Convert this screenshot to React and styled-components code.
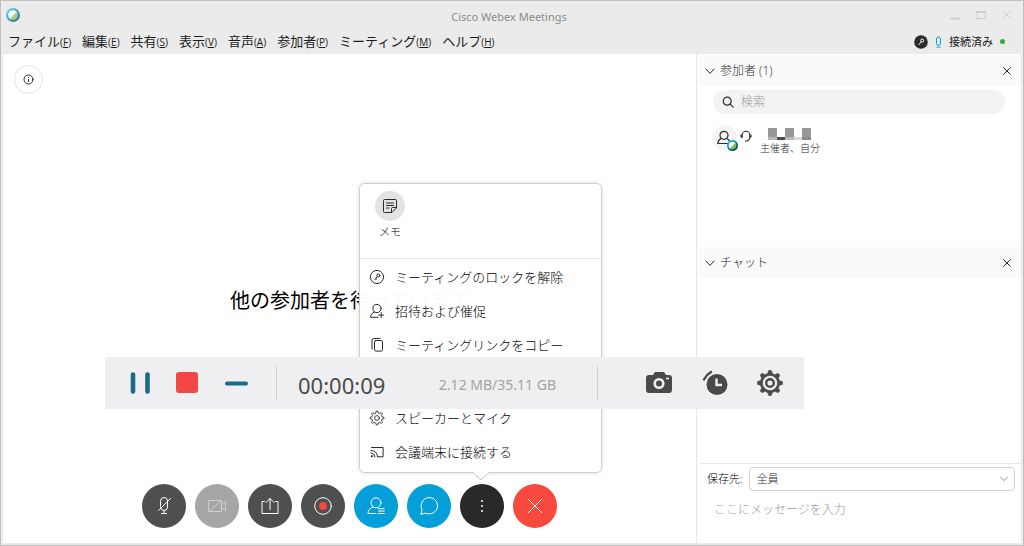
import React from 'react'
import styled, { createGlobalStyle, ThemeProvider } from 'styled-components'

const theme = {
  chrome: '#ebebeb',
  line: '#e6e6e6',
  panel: '#fafafa',
  field: '#f2f3f5',
  text: '#000',
  textSoft: '#2b2b2b',
  textHint: '#9a9a9a',
  icon: '#2b2b2b',
  dark: '#4f4f4f',
  blue: '#049fd9',
  red: '#f8493f',
  recorder: '#efeff1',
  recorderInk: '#4a4a4a',
  fontBase: '"Open Sans", "Noto Sans CJK JP", sans-serif',
  fontRecorder: '"Noto Sans", "Open Sans", sans-serif',
}

const GlobalStyle = createGlobalStyle`
  * {
    box-sizing: border-box;
  }

  body {
    margin: 0;
  }

  button, input, select, textarea {
    font: inherit;
    color: inherit;
    margin: 0;
    padding: 0;
    border: 0;
    background: none;
    outline: none;
  }

  svg {
    display: block;
    flex: none;
  }
`

const Window = styled.div`
  position: relative;
  min-height: 100vh;
  display: flex;
  flex-direction: column;
  border: 1px solid #bfbfbf;
  background: ${({theme}) => theme.chrome};
  color: ${({theme}) => theme.text};
  font-family: ${({theme}) => theme.fontBase};
  font-size: 13px;
  font-weight: 300;
  line-height: 16px;
`

const TitleBar = styled.header`
  height: 28px;
  padding: 0 11px 0 5px;
  display: grid;
  grid-template-columns: 1fr auto 1fr;
  align-items: center;
`

const Title = styled.h1`
  margin: 3px 0 0;
  font-family: ${({theme}) => theme.fontRecorder};
  font-size: 11px;
  font-weight: 400;
  color: #8c8c8c;
`

const WindowButtons = styled.div`
  display: flex;
  justify-content: flex-end;
  gap: 16px;
  color: #cdcdcd;
`

const BareButton = styled.button`
  display: flex;
  color: inherit;
`

const MenuBar = styled.div`
  height: 25px;
  padding: 0 18px 0 7px;
  display: flex;
  justify-content: space-between;
  align-items: center;
  color: #1c1c1c;
  font-weight: 400;
`

const Menus = styled.nav`
  display: flex;
  gap: 11px;
`

const MenuButton = styled.button`
  white-space: nowrap;

  & > span {
    font-size: 10px;
  }
`

const Status = styled.div`
  display: flex;
  align-items: center;
  gap: 7px;
  font-size: 11px;
`

const OnlineDot = styled.span`
  width: 5px;
  height: 5px;
  border-radius: 50%;
  background: #3aa63a;
`

const Content = styled.div`
  flex: 1;
  display: flex;
  margin: 0 2px 2px;
  background: #fff;
`

const Stage = styled.main`
  flex: 1;
  display: flex;
  flex-direction: column;
  justify-content: space-between;
  align-items: center;
  padding: 11px 0 15px;
`

const InfoButton = styled.button`
  align-self: flex-start;
  margin-left: 11px;
  width: 29px;
  height: 29px;
  display: flex;
  align-items: center;
  justify-content: center;
  border: 1px solid #e4e4e4;
  border-radius: 50%;
  color: ${({theme}) => theme.icon};
`

const Waiting = styled.p`
  margin: 24px 0 0;
  font-size: 20px;
  font-weight: 400;
  line-height: 28px;
`

const Controls = styled.div`
  display: flex;
  gap: 9px;
`

const ControlSlot = styled.div`
  position: relative;
`

const Round = styled.button`
  width: 44px;
  height: 44px;
  display: flex;
  align-items: center;
  justify-content: center;
  border-radius: 50%;
  color: ${props => props.$ink || '#fff'};
  background: ${props => props.$color};
`

const Popup = styled.div`
  position: absolute;
  bottom: 55px;
  left: 50%;
  width: 243px;
  margin-left: -123px;
  padding-bottom: 3px;
  border: 1px solid #cfcfcf;
  border-radius: 6px;
  background: rgba(255, 255, 255, 0.98);
  box-shadow: 0 0 4px rgba(0, 0, 0, 0.14);
`

const PopupArrow = styled.svg`
  position: absolute;
  top: 100%;
  left: 50%;
  margin: -1px 0 0 -10px;
`

const PopupTop = styled.div`
  height: 75px;
  padding: 7px 15px 0;
  border-bottom: 1px solid ${({theme}) => theme.line};
`

const NoteButton = styled.button`
  width: 30px;
  display: flex;
  flex-direction: column;
  align-items: center;
  gap: 3px;
  font-size: 11px;
`

const NoteDisc = styled.span`
  width: 30px;
  height: 30px;
  display: flex;
  align-items: center;
  justify-content: center;
  border-radius: 50%;
  background: #e3e3e3;
  color: ${({theme}) => theme.icon};
`

const PopupGroup = styled.div`
  padding-top: 1px;

  & + & {
    margin-top: 38px;
  }
`

const PopupItem = styled.button`
  width: 100%;
  height: 34px;
  padding-left: 9px;
  display: flex;
  align-items: center;
  gap: 10px;
  white-space: nowrap;

  & > svg {
    color: ${({theme}) => theme.icon};
  }
`

const Side = styled.aside`
  width: 325px;
  display: flex;
  flex-direction: column;
  padding: 1px 0 0 2px;
  border-left: 1px solid ${({theme}) => theme.line};
`

const Panel = styled.section`
  flex: ${props => props.$grow};
  display: flex;
  flex-direction: column;
`

const PanelHeader = styled.div`
  height: 31px;
  padding: 0 9px 0 6px;
  display: flex;
  align-items: center;
  justify-content: space-between;
  background: ${({theme}) => theme.panel};
  color: ${({theme}) => theme.textSoft};
`

const PanelTitle = styled.h2`
  margin: 0;
  display: flex;
  align-items: center;
  gap: 5px;
  font-size: 12px;
  font-weight: 300;
`

const Search = styled.label`
  height: 24px;
  margin: 4px 16px 0 14px;
  padding: 0 9px;
  display: flex;
  align-items: center;
  gap: 7px;
  border-radius: 12px;
  background: ${({theme}) => theme.field};
  color: ${({theme}) => theme.icon};
  font-size: 12px;

  & > input {
    flex: 1;
    min-width: 0;
  }

  & > input::placeholder {
    color: ${({theme}) => theme.textHint};
    opacity: 1;
  }
`

const Person = styled.div`
  margin: 11px 14px 0 13px;
  display: flex;
  color: ${({theme}) => theme.textSoft};
  font-size: 10px;
`

const Headset = styled.div`
  padding-top: 5px;
`

const PersonText = styled.div`
  margin: 3px 0 0 8px;
  display: flex;
  flex-direction: column;

  & > svg {
    margin-left: 8px;
  }
`

const Composer = styled.form`
  margin-top: auto;
  padding: 3px 6px 23px 8px;
  border-top: 1px solid ${({theme}) => theme.line};
  display: flex;
  flex-direction: column;
  gap: 9px;
`

const ToRow = styled.label`
  display: flex;
  align-items: center;
  gap: 6px;
  font-size: 11px;
  white-space: nowrap;
`

const SelectBox = styled.span`
  flex: 1;
  height: 24px;
  padding-right: 6px;
  display: flex;
  align-items: center;
  border: 1px solid #d4d4d4;
  border-radius: 4px;
  color: #6a6a6a;

  & > select {
    flex: 1;
    padding-left: 7px;
    appearance: none;
    color: ${({theme}) => theme.textSoft};
  }
`

const Message = styled.textarea`
  height: 20px;
  padding-left: 7px;
  resize: none;
  font-size: 12px;
  line-height: 20px;

  &::placeholder {
    color: ${({theme}) => theme.textHint};
    opacity: 1;
  }
`

const Recorder = styled.div`
  position: absolute;
  top: 356px;
  left: 104px;
  height: 52px;
  display: flex;
  align-items: center;
  background: ${({theme}) => theme.recorder};
  color: ${({theme}) => theme.recorderInk};
  font-family: ${({theme}) => theme.fontRecorder};
  font-weight: 400;
`

const RecorderGroup = styled.div`
  padding: ${props => props.$pad};
  display: flex;
  align-items: center;
  gap: ${props => props.$gap};
`

const RecorderInfo = styled.div`
  width: 322px;
  height: 34px;
  padding: 4px 41px 0 21px;
  display: flex;
  align-items: center;
  justify-content: space-between;
  border: 1px solid #d2d2d4;
  border-width: 0 1px;
`

const Time = styled.time`
  font-size: 22px;
`

const Size = styled.span`
  font-size: 14px;
  color: #a3a3a3;
`

const Line = ({ size = 16, box = 16, width = 1, children }) => (
  <svg
    width={size}
    height={size}
    viewBox={`0 0 ${box} ${box}`}
    fill="none"
    stroke="currentColor"
    strokeWidth={width}
    strokeLinecap="round"
    strokeLinejoin="round"
    >
    {children}
  </svg>
)

const Ball = ({ size, ring = ['#5cc8e8', '#3d6f92'], core = '#a5cf7c' }) => (
  <svg width={size} height={size} viewBox="0 0 14 14">
    <defs>
      <linearGradient id={`ring${size}`} x1="0" y1="0" x2="1" y2="1">
        <stop offset="0.2" stopColor={ring[0]} />
        <stop offset="0.9" stopColor={ring[1]} />
      </linearGradient>
      <linearGradient id={`core${size}`} x1="0" y1="0" x2="1" y2="1">
        <stop offset="0.45" stopColor="#fff" />
        <stop offset="0.6" stopColor={core} />
      </linearGradient>
    </defs>
    <circle cx="7" cy="7" r="7" fill={`url(#ring${size})`} />
    <circle cx="7" cy="7" r="4.8" fill={`url(#core${size})`} />
  </svg>
)

const Cross = ({ size }) => (
  <Line size={size} box={10}>
    <path d="M1.5 1.5l7 7M8.5 1.5l-7 7" />
  </Line>
)

const Chevron = () => (
  <Line size={10} box={10}>
    <path d="M1 3 5 7.4 9 3" />
  </Line>
)

const KeyIcon = () => (
  <Line>
    <circle cx="8" cy="8" r="6.6" />
    <circle cx="9.3" cy="6.4" r="1.5" />
    <path d="M8.2 7.6 5.7 10.8M6.8 9.4l.8.7" />
  </Line>
)

const InviteIcon = () => (
  <Line>
    <circle cx="8" cy="5.5" r="4.1" />
    <path d="M5.6 9C3 10 1.6 11.6 1.6 14.3H9M12.2 9.6v5M9.7 12.1h5" />
  </Line>
)

const CopyIcon = () => (
  <Line>
    <rect x="5.5" y="3.5" width="8" height="10.6" rx="1.4" />
    <path d="M3 12V3Q3 1.5 4.5 1.5H11" />
  </Line>
)

const gearPath = (cx, cy, inner, outer, teeth) => {
  const points = []
  for (let i = 0; i < teeth; i++) {
    [[-0.3, inner], [-0.14, outer], [0.14, outer], [0.3, inner]].forEach(([step, r]) => {
      const a = (i + step) * 2 * Math.PI / teeth
      points.push(`${(cx + r * Math.sin(a)).toFixed(2)} ${(cy - r * Math.cos(a)).toFixed(2)}`)
    })
  }
  return `M${points.join('L')}Z`
}

const GearIcon = () => (
  <Line width={0.9}>
    <path d={gearPath(8, 8, 5.2, 6.9, 8)} />
    <circle cx="8" cy="8" r="2.4" />
  </Line>
)

const CastIcon = () => (
  <Line>
    <path d="M2.5 3.5h11.6v9.3H9.2M2 6.4q6.2.4 6.6 6.4M2 8.9q3.7.3 4 3.9" />
    <circle cx="2.7" cy="12.2" r="0.6" fill="currentColor" />
  </Line>
)

const menus = [
  ['ファイル', 'F'],
  ['編集', 'E'],
  ['共有', 'S'],
  ['表示', 'V'],
  ['音声', 'A'],
  ['参加者', 'P'],
  ['ミーティング', 'M'],
  ['ヘルプ', 'H'],
]

const meetingItems = [
  { label: 'ミーティングのロックを解除', icon: <KeyIcon /> },
  { label: '招待および催促', icon: <InviteIcon /> },
  { label: 'ミーティングリンクをコピー', icon: <CopyIcon /> },
]

const deviceItems = [
  { label: 'スピーカーとマイク', icon: <GearIcon /> },
  { label: '会議端末に接続する', icon: <CastIcon /> },
]

const controls = [
  {
    label: 'ミュート解除',
    color: theme.dark,
    icon: <path d="M8.5 7a3.5 3.5 0 0 1 7 0v6a3.5 3.5 0 0 1-7 0zM12 16.5v3M9.5 19.5h5M6.5 16.5 18.5 4.5" />,
  },
  {
    label: 'ビデオ',
    color: '#a6a6a6',
    ink: '#cfcfcf',
    icon: <path d="M4 6.5h12.5v11H4zM16.5 10.5 20.5 7.5v9l-4-3M4 17.5 16.5 6.5" />,
  },
  {
    label: '共有',
    color: theme.dark,
    icon: <path d="M6.5 7.5H4v12h16v-12h-2.5M12 15.5V4.5M8 8.5l4-4 4 4" />,
  },
  {
    label: '録画',
    color: theme.dark,
    icon: (
      <>
        <circle cx="12" cy="12" r="8.3" />
        <circle cx="12" cy="12" r="3.9" fill={theme.red} stroke="none" />
      </>
    ),
  },
  {
    label: '参加者',
    color: theme.blue,
    icon: (
      <>
        <circle cx="12" cy="8.8" r="5" />
        <path d="M9 13.2c-3.2.8-5 2.8-5 6.3h8M14.5 14.7h5.8M14.5 17.1h5.8M14.5 19.5h5.8" />
      </>
    ),
  },
  {
    label: 'チャット',
    color: theme.blue,
    icon: <path d="M4 20l1-4.5a8.2 8.2 0 1 1 4 3.8z" />,
  },
]

const PopupItems = ({ items }) => (
  <PopupGroup>
    {items.map(item => (
      <PopupItem key={item.label} role="menuitem">
        {item.icon}
        {item.label}
      </PopupItem>
    ))}
  </PopupGroup>
)

const MoreMenu = () => (
  <Popup role="menu">
    <PopupTop>
      <NoteButton>
        <NoteDisc>
          <Line>
            <path d="M14.5 9.5V2.5q0-1-1-1h-11q-1 0-1 1v11q0 1 1 1h7zM9.5 14.5v-4q0-1 1-1h4M4.5 5h7M4.5 7.5h7M4.5 10h2.5" />
          </Line>
        </NoteDisc>
        メモ
      </NoteButton>
    </PopupTop>
    <PopupItems items={meetingItems} />
    <PopupItems items={deviceItems} />
    <PopupArrow width="20" height="10" viewBox="0 0 20 10">
      <path d="M0 0h20Q18 1 16.5 2.5L10 9 3.5 2.5Q2 1 0 0z" fill="#fff" />
      <path d="M1 1.5Q2.5 1.5 3.5 2.5L10 9l6.5-6.5q1-1 2.5-1" fill="none" stroke="#c6c6c6" />
    </PopupArrow>
  </Popup>
)

const ParticipantsPanel = () => (
  <Panel $grow="0 0 192px">
    <PanelHeader>
      <PanelTitle><Chevron />参加者 (1)</PanelTitle>
      <BareButton aria-label="参加者を閉じる"><Cross size={10} /></BareButton>
    </PanelHeader>
    <Search>
      <Line size={12} box={12} width={1.2}>
        <circle cx="5.2" cy="5.2" r="4" />
        <path d="m8.2 8.2 3 3" />
      </Line>
      <input type="search" placeholder="検索" aria-label="検索" />
    </Search>
    <Person>
      <svg width="28" height="28" viewBox="0 0 28 28">
        <circle cx="12.5" cy="13" r="12.5" fill={theme.field} />
        <g fill="none" stroke="#2b2b2b" strokeWidth="1.2">
          <circle cx="12" cy="10.3" r="4" />
          <path d="M9.3 13.5C7 14.4 6 16 5.8 18.5h12.4c-.2-2.5-1.3-4.1-3.5-5" />
        </g>
        <svg x="15" y="15" width="11" height="11">
          <Ball size={11} ring={['#16aee0', '#0b3550']} core="#6cc04a" />
        </svg>
      </svg>
      <Headset>
        <Line size={12} box={12} width={1.1}>
          <path d="M2.2 7.5V5a3.8 3.8 0 0 1 7.6 0v2.5q0 2.4-2.8 3.2M2.2 4.5Q.8 4.8.8 6t1.4 1.5M9.8 4.5q1.4.3 1.4 1.5T9.8 7.5M5.5 11h1.5" />
        </Line>
      </Headset>
      <PersonText>
        <svg width="44" height="12" viewBox="0 0 44 12">
          <path d="M0 0h9v9H0zM17 0h9v9h-9zM34 0h9v9h-9z" fill="#989898" />
          <path d="M0 9h9v3H0zM17 9h9v3h-9z" fill="#b8b8b8" />
          <path d="M9 9h8v3H9z" fill="#4c4c4c" />
          <path d="M26 9h8v3h-8z" fill="#d8d8d8" />
          <path d="M34 9h9v3h-9z" fill="#8a8a8a" />
        </svg>
        主催者、自分
      </PersonText>
    </Person>
  </Panel>
)

const ChatPanel = () => (
  <Panel $grow="1">
    <PanelHeader>
      <PanelTitle><Chevron />チャット</PanelTitle>
      <BareButton aria-label="チャットを閉じる"><Cross size={10} /></BareButton>
    </PanelHeader>
    <Composer>
      <ToRow>
        保存先:
        <SelectBox>
          <select defaultValue="all">
            <option value="all">全員</option>
          </select>
          <Line size={8} box={10}>
            <path d="M1 3 5 7 9 3" />
          </Line>
        </SelectBox>
      </ToRow>
      <Message placeholder="ここにメッセージを入力" aria-label="メッセージ" />
    </Composer>
  </Panel>
)

const RecorderBar = () => (
  <Recorder>
    <RecorderGroup $pad="0 27px 0 24px" $gap="24px">
      <BareButton aria-label="一時停止">
        <svg width="22" height="24" viewBox="0 0 22 24">
          <path d="M4 3.5v17M18.500 3.5v17" stroke="#196a8a" strokeWidth="4.6" strokeLinecap="round" />
        </svg>
      </BareButton>
      <BareButton aria-label="停止">
        <svg width="24" height="24" viewBox="0 0 24 24">
          <rect x="1" y="1" width="22" height="21" rx="3" fill="#f54646" />
        </svg>
      </BareButton>
      <BareButton aria-label="最小化">
        <svg width="26" height="24" viewBox="0 0 26 24">
          <path d="M4 12.5h19" stroke="#196a8a" strokeWidth="4" strokeLinecap="round" />
        </svg>
      </BareButton>
    </RecorderGroup>
    <RecorderInfo>
      <Time>00:00:09</Time>
      <Size>2.12 MB/35.11 GB</Size>
    </RecorderInfo>
    <RecorderGroup $pad="0 20px 0 46px" $gap="25px">
      <BareButton aria-label="スクリーンショット">
        <svg width="30" height="28" viewBox="0 0 30 28">
          <path d="M5 6h4l2-3h9l2 3h3q3 0 3 3v12q0 3-3 3H5q-3 0-3-3V9q0-3 3-3z" fill="#4a4a4a" />
          <circle cx="15" cy="14.5" r="4.3" fill="none" stroke="#efeff1" strokeWidth="2.6" />
          <path d="M22 9.5h3" stroke="#efeff1" strokeWidth="1.6" />
        </svg>
      </BareButton>
      <BareButton aria-label="タイマー">
        <svg width="32" height="28" viewBox="0 0 32 28">
          <circle cx="18" cy="15.5" r="10.5" fill="#4a4a4a" />
          <path d="M17.5 9.5V16H23" fill="none" stroke="#efeff1" strokeWidth="2.4" />
          <path d="M5 10.5Q7.5 5.5 12 3" fill="none" stroke="#4a4a4a" strokeWidth="2.4" strokeLinecap="round" />
        </svg>
      </BareButton>
      <BareButton aria-label="設定">
        <svg width="28" height="28" viewBox="0 0 28 28">
          <path
            d={`${gearPath(14, 14, 9.8, 12.6, 8)}M14 6.4a7.6 7.6 0 1 0 0 15.2 7.6 7.6 0 0 0 0-15.2z`}
            fill="#4a4a4a"
            fillRule="evenodd"
            stroke="#4a4a4a"
            strokeWidth="0.6"
            strokeLinejoin="round"
          />
          <circle cx="14" cy="14" r="3.8" fill="none" stroke="#4a4a4a" strokeWidth="2.4" />
        </svg>
      </BareButton>
    </RecorderGroup>
  </Recorder>
)

const App = () => (
  <ThemeProvider theme={theme}>
    <GlobalStyle />
    <Window>
      <TitleBar>
        <Ball size={14} />
        <Title>Cisco Webex Meetings</Title>
        <WindowButtons>
          <BareButton aria-label="最小化">
            <Line size={10} box={10}><path d="M1 8.5h8" strokeWidth="2" /></Line>
          </BareButton>
          <BareButton aria-label="最大化">
            <Line size={10} box={10}><path d="M.5 1.5h9v7h-9zM.5 2.5h9" /></Line>
          </BareButton>
          <BareButton aria-label="閉じる"><Cross size={10} /></BareButton>
        </WindowButtons>
      </TitleBar>
      <MenuBar>
        <Menus>
          {menus.map(([label, key]) => (
            <MenuButton key={key}>
              {label}<span>(<u>{key}</u>)</span>
            </MenuButton>
          ))}
        </Menus>
        <Status>
          <svg width="14" height="14" viewBox="0 0 14 14">
            <circle cx="7" cy="7" r="6.8" fill="#2b2b2b" />
            <g fill="none" stroke="#fff">
              <circle cx="8.2" cy="5.5" r="1.5" />
              <path d="M7.2 6.7 4.8 9.9" />
            </g>
          </svg>
          <svg width="7" height="12" viewBox="0 0 7 12" fill="none" stroke={theme.blue}>
            <path d="M1.5 3a2 2 0 0 1 4 0v4.5a2 2 0 0 1-4 0zM1.5 11.2h4" />
          </svg>
          接続済み
          <OnlineDot />
        </Status>
      </MenuBar>
      <Content>
        <Stage>
          <InfoButton aria-label="ミーティング情報">
            <Line size={11} box={11}>
              <circle cx="5.5" cy="5.5" r="4.5" />
              <path d="M5.5 5.5v2M5.5 3.5v.1" />
            </Line>
          </InfoButton>
          <Waiting>他の参加者を待っています</Waiting>
          <Controls>
            {controls.map(({ label, color, ink, icon }) => (
              <Round key={label} $color={color} $ink={ink} aria-label={label}>
                <Line size={24} box={24}>{icon}</Line>
              </Round>
            ))}
            <ControlSlot>
              <Round $color="#292929" aria-label="その他">
                <svg width="24" height="24" viewBox="0 0 24 24" fill="#fff">
                  <circle cx="12" cy="7" r="1" />
                  <circle cx="12" cy="12" r="1" />
                  <circle cx="12" cy="17" r="1" />
                </svg>
              </Round>
              <MoreMenu />
            </ControlSlot>
            <Round $color={theme.red} aria-label="退出">
              <Line size={24} box={24}><path d="M5.5 5.5l13 13M18.5 5.5l-13 13" /></Line>
            </Round>
          </Controls>
        </Stage>
        <Side>
          <ParticipantsPanel />
          <ChatPanel />
        </Side>
      </Content>
      <RecorderBar />
    </Window>
  </ThemeProvider>
)

export default App
